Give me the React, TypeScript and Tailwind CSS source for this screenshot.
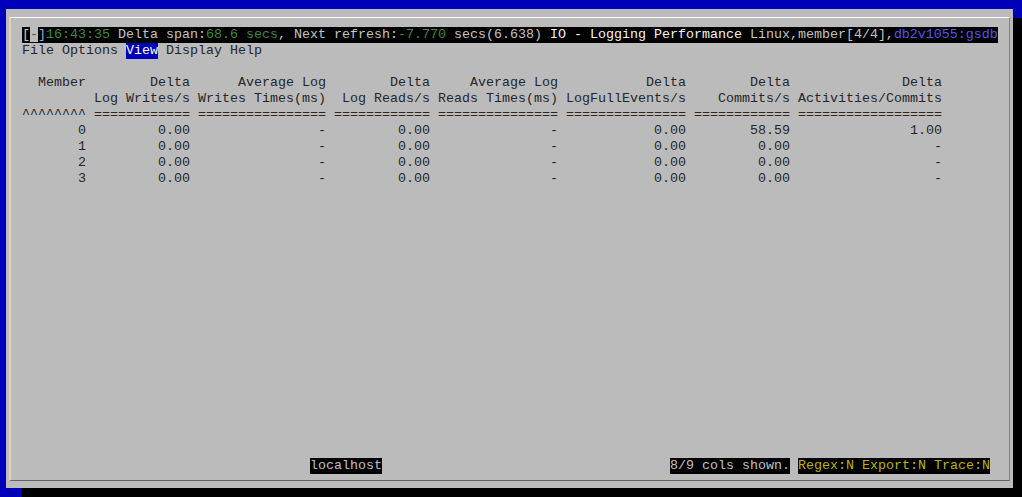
import React from "react"

const mono = "font-['Liberation_Mono',monospace] text-[13.333px] leading-4"

const columns = [
  { top: "Member", bottom: "", rule: "^^^^^^^^" },
  { top: "Delta", bottom: "Log Writes/s", rule: "============" },
  { top: "Average Log", bottom: "Writes Times(ms)", rule: "================" },
  { top: "Delta", bottom: "Log Reads/s", rule: "============" },
  { top: "Average Log", bottom: "Reads Times(ms)", rule: "===============" },
  { top: "Delta", bottom: "LogFullEvents/s", rule: "===============" },
  { top: "Delta", bottom: "Commits/s", rule: "============" },
  { top: "Delta", bottom: "Activities/Commits", rule: "==================" },
]

const rows = [
  ["0", "0.00", "-", "0.00", "-", "0.00", "58.59", "1.00"],
  ["1", "0.00", "-", "0.00", "-", "0.00", "0.00", "-"],
  ["2", "0.00", "-", "0.00", "-", "0.00", "0.00", "-"],
  ["3", "0.00", "-", "0.00", "-", "0.00", "0.00", "-"],
]

const TitleBar = () => {
  return (
    <div className="flex">
      <div className="bg-black whitespace-pre">
        <span className="text-[#d8c8a8]">[</span>
        <span className="bg-[#bbbbbb] text-[#555555]">-</span>
        <span className="text-[#8fb0d8]">]</span>
        <span className="text-[#3a8c3a]">16:43:35</span>
        <span className="text-[#c4c4c4]"> Delta span:</span>
        <span className="text-[#3a8c3a]">68.6 secs</span>
        <span className="text-[#c4c4c4]">, Next refresh:</span>
        <span className="text-[#3a8c3a]">-7.770</span>
        <span className="text-[#c4c4c4]"> secs(6.638)</span>
        <span className="text-[#f4f4f4]"> IO - Logging Performance</span>
        <span className="text-[#c4c4c4]"> Linux,member[4/4],</span>
        <span className="text-[#5555f0]">db2v1055:gsdb</span>
      </div>
    </div>
  )
}

const MenuBar = () => {
  return (
    <div className="flex whitespace-pre text-[#262626]">
      <span>File Options </span>
      <span className="bg-[#0000bb] text-white">View</span>
      <span> Display Help</span>
    </div>
  )
}

const StatsTable = () => {
  return (
    <div className="grid grid-cols-[64px_96px_128px_96px_120px_120px_96px_144px] gap-x-2 text-right whitespace-pre text-[#262626]">
      {columns.map((c, i) => <div key={"t" + i}>{c.top}</div>)}
      {columns.map((c, i) => <div key={"b" + i}>{c.bottom || " "}</div>)}
      {columns.map((c, i) => <div key={"r" + i}>{c.rule}</div>)}
      {rows.map((r, ri) => r.map((v, ci) => <div key={ri + "-" + ci}>{v}</div>))}
    </div>
  )
}

const StatusLine = () => {
  return (
    <div className="mt-auto flex whitespace-pre">
      <span className="w-[288px]"></span>
      <span className="bg-black text-[#c0c0c8]">localhost</span>
      <span className="w-[288px]"></span>
      <span className="bg-black text-[#c0c0c8]">8/9 cols shown.</span>
      <span className="w-2"></span>
      <span className="bg-black text-[#b8b800]">Regex:N Export:N Trace:N</span>
    </div>
  )
}

export default function App() {
  return (
    <div className={"w-[1022px] h-[497px] overflow-hidden bg-[#0000bb] pl-[6px] pt-[9px] " + mono}>
      <div className="w-[1007px] h-[479px] bg-[#bbbbbb] shadow-[16px_9px_0_0_#000] pt-2 pl-[3px] pr-[3px] pb-[7px] flex">
        <div className="flex-1 flex flex-col border-t border-t-white border-l-2 border-l-[#e6cfb4] border-r border-r-[#6f8aa8] border-b border-b-[#606060] pt-[9px] pl-[11px] pb-[6px]">
          <TitleBar />
          <MenuBar />
          <div className="h-4" />
          <StatsTable />
          <StatusLine />
        </div>
      </div>
    </div>
  )
}
